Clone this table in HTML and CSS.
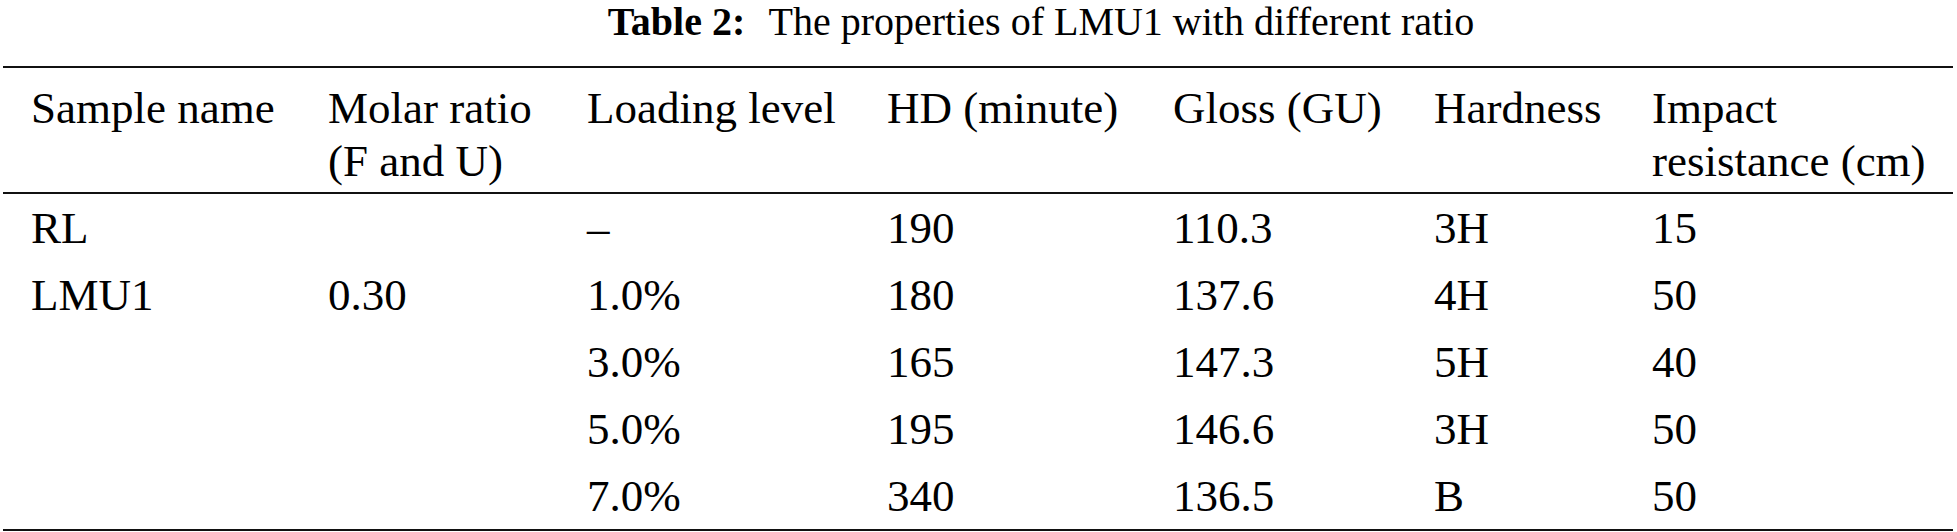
FILE: index.html
```html
<!DOCTYPE html>
<html lang="en">
<head>
    <meta charset="UTF-8">
    <title>Table 2: The properties of LMU1 with different ratio</title>
    <link rel="stylesheet" href="styles.css">
</head>
<body>
    <div class="caption"><span class="caption-label">Table 2:</span> The properties of LMU1 with different ratio</div>

    <table class="data-table">
        <colgroup>
            <col class="col-name">
            <col class="col-ratio">
            <col class="col-level">
            <col class="col-hd">
            <col class="col-gloss">
            <col class="col-hard">
            <col class="col-impact">
        </colgroup>
        <thead>
            <tr>
                <th>Sample name</th>
                <th>Molar ratio<br>(F and U)</th>
                <th>Loading level</th>
                <th>HD (minute)</th>
                <th>Gloss (GU)</th>
                <th>Hardness</th>
                <th>Impact<br>resistance (cm)</th>
            </tr>
        </thead>
        <tbody>
            <tr>
                <td>RL</td>
                <td></td>
                <td>–</td>
                <td>190</td>
                <td>110.3</td>
                <td>3H</td>
                <td>15</td>
            </tr>
            <tr>
                <td>LMU1</td>
                <td>0.30</td>
                <td>1.0%</td>
                <td>180</td>
                <td>137.6</td>
                <td>4H</td>
                <td>50</td>
            </tr>
            <tr>
                <td></td>
                <td></td>
                <td>3.0%</td>
                <td>165</td>
                <td>147.3</td>
                <td>5H</td>
                <td>40</td>
            </tr>
            <tr>
                <td></td>
                <td></td>
                <td>5.0%</td>
                <td>195</td>
                <td>146.6</td>
                <td>3H</td>
                <td>50</td>
            </tr>
            <tr>
                <td></td>
                <td></td>
                <td>7.0%</td>
                <td>340</td>
                <td>136.5</td>
                <td>B</td>
                <td>50</td>
            </tr>
        </tbody>
    </table>
</body>
</html>
```

FILE: styles.css
```css
/* Page */
body {
    margin: 0 4px 0 3px;
    font-family: "Liberation Serif", "Times New Roman", serif;
    font-size: 45px;
    color: #000;
    background: #fff;
}

.caption {
    font-size: 40px;
    line-height: 44px;
    text-align: center;
    padding-left: 126px;
    margin-bottom: 22px;
}

.caption-label {
    font-weight: bold;
    margin-right: 14px;
}

/* Table */
.data-table {
    width: 100%;
    table-layout: fixed;
    border-collapse: collapse;
    border-top: 2px solid #111;
    border-bottom: 2px solid #111;
}

.col-name { width: 297px; }
.col-ratio { width: 259px; }
.col-level { width: 300px; }
.col-hd { width: 286px; }
.col-gloss { width: 261px; }
.col-hard { width: 218px; }

.data-table th,
.data-table td {
    padding: 0 0 0 28px;
    text-align: left;
    vertical-align: top;
    white-space: nowrap;
    font-weight: normal;
}

.data-table thead th {
    line-height: 53px;
    padding-top: 14px;
    padding-bottom: 4px;
    border-bottom: 2px solid #111;
}

.data-table tbody td {
    line-height: 65px;
    padding-top: 2px;
}
```
